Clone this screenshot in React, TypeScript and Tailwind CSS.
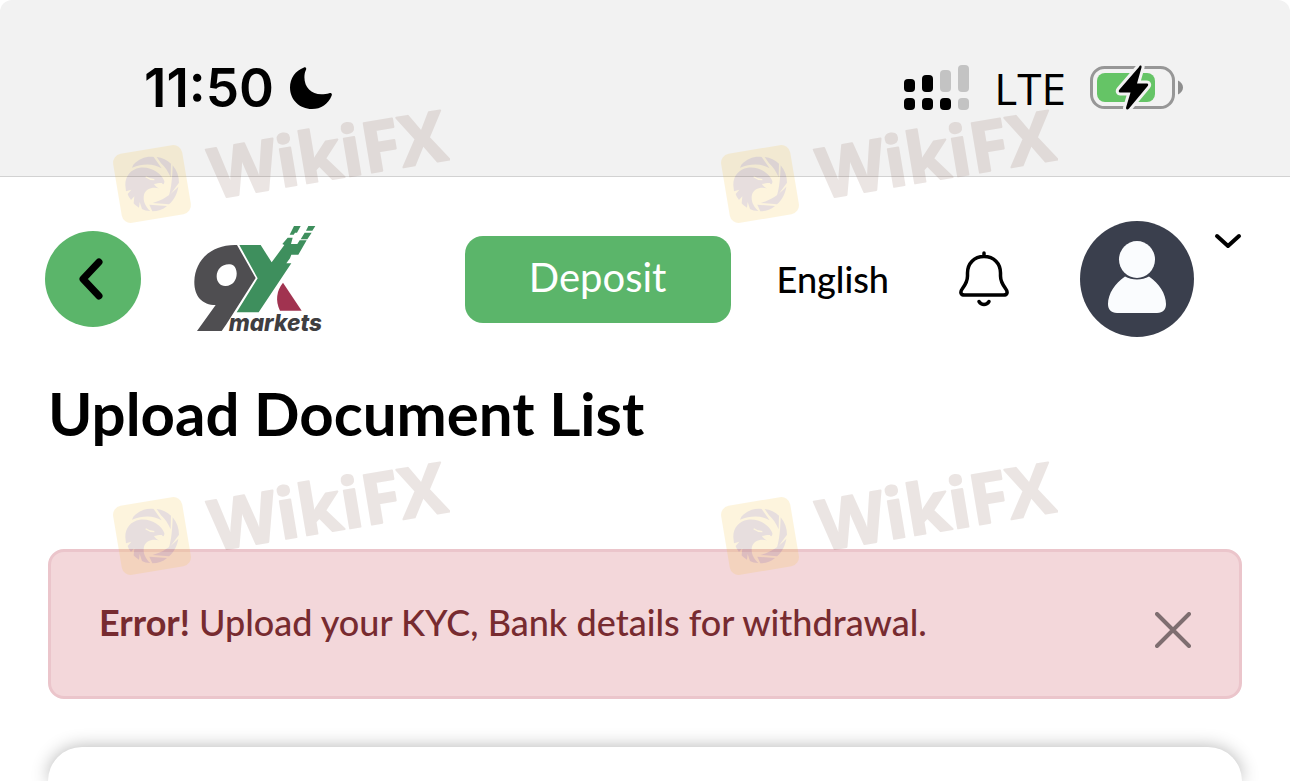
import { useState } from "react";

function MoonIcon() {
  return (
    <svg viewBox="0 0 42 42" className="h-[42px] w-[42px]" fill="currentColor" aria-hidden="true">
      <path d="M14 .4C15.500 -.2 16.800 1.200 16 2.800 14.900 5.200 14.400 7.500 14.400 10.200 14.400 20.200 21.200 27.300 31.400 27.300 34.200 27.300 36.800 27 39.200 26.200 41.200 25.500 42.500 26.800 41.600 28.700 38.300 37 31 42 22 42 9.500 42 0 32.800 0 20.500 0 11.500 5.300 3.500 14 .4Z" />
    </svg>
  );
}

function SignalIcon() {
  return (
    <svg viewBox="0 0 66 46" className="h-[46px] w-[66px]" aria-hidden="true">
      <g fill="#000">
        <rect x="0" y="14" width="11" height="13" rx="4" />
        <rect x="18" y="10" width="11" height="17" rx="4" />
        <rect x="0" y="33" width="11" height="12" rx="4" />
        <rect x="18" y="33" width="11" height="12" rx="4" />
        <rect x="36" y="33" width="11" height="12" rx="4" />
      </g>
      <g fill="#c3c3c3">
        <rect x="36" y="5" width="11" height="22" rx="4" />
        <rect x="54" y="0" width="11" height="27" rx="4" />
        <rect x="54" y="33" width="11" height="12" rx="4" />
      </g>
    </svg>
  );
}

function BatteryIcon() {
  const bolt = "M49 2C50 -.5 52 .3 51.500 2.500L47 18.500H56.500C58.300 18.500 58.700 19.900 57.500 21.300L39 43.500C37.500 45.300 35.500 44.300 36.200 42L40.500 27.500H30.500C28.700 27.500 28.200 26 29.500 24.500Z";
  return (
    <svg viewBox="0 0 94 46" className="h-[46px] w-[94px]" aria-hidden="true">
      <rect x="1.500" y="2.500" width="82" height="40" rx="13" fill="none" stroke="#979797" strokeWidth="3" />
      <path d="M88 15.500C91 17 93 19.500 93 22.500S91 28 88 29.500Z" fill="#8e8e8e" />
      <rect x="7" y="8" width="58" height="29" rx="8" fill="#65c466" />
      <path d={bolt} fill="#000" stroke="#f2f2f2" strokeWidth="6" strokeLinejoin="round" />
      <path d={bolt} fill="#000" />
    </svg>
  );
}

function BrandLogo() {
  return (
    <svg viewBox="40 36 405 330" className="h-[110px] w-[135px]" role="img" aria-label="9X markets">
      <path
        fillRule="evenodd"
        fill="#4f4e51"
        d="M172 99 228 198 140 337 126 357H52L108 279C67 279 43 252 44 208 46 143 97 96 172 99ZM151 157C128 155 111 172 111 193 111 211 123 223 138 222 160 221 172 203 171 183 170 168 163 158 151 157Z"
      />
      <path
        fill="#3e8f5d"
        d="M179 99H243L276 151 314 99 308 96 324 77H339L334 96H353L360 85H381L356 128H335L331 139 320 154H335L237 301H171L234 199Z"
      />
      <path fill="#3e8f5d" d="M343 42H363L352 62H346L342 68H330ZM386 42H407L398 56H379ZM375 62H396L383 82H363Z" />
      <path fill="#a13350" d="M310 212 366 296H301C286 266 291 235 310 212Z" />
      <text x="147" y="357" fill="#3f3e41" fontFamily="Inter, sans-serif" fontSize="68" fontWeight="800" fontStyle="italic">
        markets
      </text>
    </svg>
  );
}

function BellIcon() {
  return (
    <svg viewBox="0 0 50 56" className="h-14 w-[50px]" fill="none" stroke="#000" strokeWidth="3.500" strokeLinecap="round" strokeLinejoin="round" aria-hidden="true">
      <path d="M25 2V5M25 5.500C15 5.500 8.500 12.500 8.500 22V25C8.500 30 6.500 33.500 3.500 37.500 .5 41.500 2 44 5.500 44H44.500C48 44 49.500 41.500 46.500 37.500 43.500 33.500 41.500 30 41.500 25V22C41.500 12.500 35 5.500 25 5.500Z" />
      <path d="M20 50.500C22.500 54.500 27.500 54.500 30 50.500" />
    </svg>
  );
}

function AvatarIcon() {
  return (
    <svg viewBox="0 0 114 116" className="h-[116px] w-[114px]" aria-hidden="true">
      <ellipse cx="57" cy="58" rx="57" ry="58" fill="#3a3f4d" />
      <path fill="#fafcfe" d="M45 55.500C52 59.500 62 59.500 69 55.500 79 62 86 73 86 83 86 88.500 83 92 77 92H37C31 92 28 88.500 28 83 28 73 35 62 45 55.500Z" />
      <ellipse cx="57" cy="38.500" rx="18" ry="18.500" fill="#fafcfe" />
    </svg>
  );
}

function Watermark() {
  return (
    <svg viewBox="0 0 350 130" className="h-[130px] w-[350px] opacity-[0.16]" aria-hidden="true">
      <g transform="rotate(-9.500 52 84)">
        <rect x="17" y="49" width="70" height="70" rx="9" fill="#f3c031" />
      </g>
      <g transform="scale(.3333)">
        <g fill="#6f3b38">
          <path d="M100 194C118 175 140 168 161 171L185 205C160 190 130 190 96 203Z" />
          <path d="M170 171C187 173 202 180 213 191L212 232C205 215 194 200 183 190Z" />
          <path d="M218 196C231 211 237 229 237 248L206 290C215 262 217 228 218 196Z" />
          <path d="M235 260C232 280 222 300 207 313L158 309C188 300 210 286 235 260Z" />
          <path d="M148 314 201 318C188 329 174 334 157 334Z" />
          <path d="M76 256C75 228 92 208 119 203 153 198 185 220 193 243 194 251 189 257 186 249 180 248 171 250 162 252 166 259 171 263 178 265 155 260 137 267 132 284 128 302 136 320 151 333 141 333 132 330 126 327L119 306 117 323C110 319 105 315 101 310L103 289 93 300C88 293 85 288 83 282L94 269 78 274Z" />
        </g>
        <path d="M137 230C145 236 153 239 163 239" fill="none" stroke="#f3c031" strokeWidth="4" />
      </g>
      <text
        transform="translate(114 99) rotate(-9.500)"
        fill="#886356"
        stroke="#886356"
        strokeWidth="2"
        strokeLinejoin="round"
        fontFamily="'Open Sans', sans-serif"
        fontSize="70"
        fontWeight="700"
      >
        WikiFX
      </text>
    </svg>
  );
}

function StatusBar() {
  return (
    <div className="flex h-[177px] items-center justify-between rounded-t-xl border-b border-[#d2d2d2] bg-[#f2f2f2] pr-[106px] pl-36">
      <div className="flex items-center gap-4">
        <span className="font-[Inter,sans-serif] text-[53px] leading-none font-semibold">11:50</span>
        <MoonIcon />
      </div>
      <div className="flex items-center gap-6">
        <SignalIcon />
        <span className="font-['Liberation_Sans_Narrow','Open_Sans',sans-serif] text-[44px] leading-none font-medium">LTE</span>
        <BatteryIcon />
      </div>
    </div>
  );
}

export default function App() {
  const [showError, setShowError] = useState(true);

  return (
    <div className="relative flex min-h-screen flex-col overflow-hidden bg-white font-[Lato,sans-serif] text-black">
      <StatusBar />

      <header className="flex items-center justify-between pt-11 pr-12 pl-[45px]">
        <div className="flex items-center gap-[52px]">
          <button type="button" aria-label="Back" className="flex h-24 w-24 items-center justify-center rounded-full bg-[#5bb56a]">
            <svg viewBox="0 0 24 42" className="mr-1 h-[42px] w-6" fill="none" stroke="#000" strokeWidth="7" strokeLinecap="round" strokeLinejoin="round" aria-hidden="true">
              <path d="M20 4 4 21 20 38" />
            </svg>
          </button>
          <BrandLogo />
        </div>

        <div className="flex items-center">
          <button type="button" className="h-[87px] w-[266px] rounded-[18px] bg-[#5bb56a] pb-1 text-[40px] text-white">
            Deposit
          </button>
          <button type="button" className="ml-[46px] text-[36px] font-medium">
            English
          </button>
          <button type="button" aria-label="Notifications" className="ml-[70px]">
            <BellIcon />
          </button>
          <button type="button" aria-label="Account menu" className="ml-[71px] flex items-start gap-5">
            <AvatarIcon />
            <svg viewBox="0 0 28 16" className="mt-3 h-4 w-7" fill="none" stroke="#000" strokeWidth="4" strokeLinecap="round" strokeLinejoin="round" aria-hidden="true">
              <path d="M3 3 14 13 25 3" />
            </svg>
          </button>
        </div>
      </header>

      <main className="flex flex-1 flex-col px-12 pt-9">
        <h1 className="text-[60px] leading-[80px] font-bold">Upload Document List</h1>

        {showError && (
          <div role="alert" className="mt-24 flex h-[150px] items-center justify-between rounded-2xl border-3 border-[#ebc5cb] bg-[#f3d7da] px-12 text-[#772b30]">
            <p className="pb-1 text-[36px] font-medium">
              <strong className="font-bold">Error!</strong> Upload your KYC, Bank details for withdrawal.
            </p>
            <button type="button" aria-label="Close" onClick={() => setShowError(false)} className="mt-3">
              <svg viewBox="0 0 36 36" className="h-9 w-9" stroke="#7e6e70" strokeWidth="4" strokeLinecap="round" aria-hidden="true">
                <path d="M2 2 34 34M34 2 2 34" />
              </svg>
            </button>
          </div>
        )}

        <section className="mt-12 flex-1 rounded-t-[60px] bg-white shadow-[0_0_18px_rgba(0,0,0,0.3)]" />
      </main>

      <div className="pointer-events-none absolute inset-0 grid auto-rows-[352px] grid-cols-[608px_1fr] overflow-hidden pt-[100px] pl-[100px]">
        <Watermark />
        <Watermark />
        <Watermark />
        <Watermark />
      </div>
    </div>
  );
}
